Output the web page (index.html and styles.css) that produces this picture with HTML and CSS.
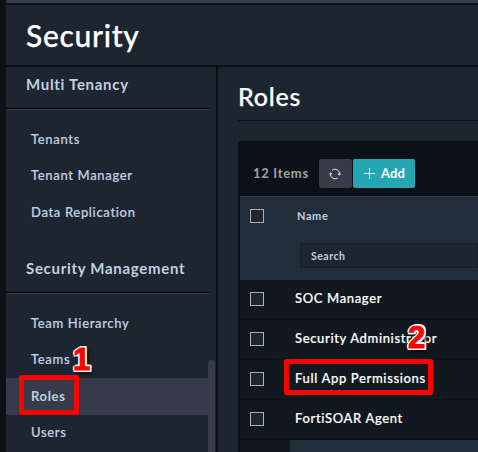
FILE: index.html
```html
<!DOCTYPE html>
<html lang="en">
<head>
<meta charset="utf-8">
<title>Security</title>
<link rel="stylesheet" href="styles.css">
</head>
<body>
<div class="app">
  <div class="topbar"></div>
  <header class="header"><h1>Security</h1></header>
  <div class="body">
    <nav class="sidebar">
      <h2>Multi Tenancy</h2>
      <ul>
        <li>Tenants</li>
        <li>Tenant Manager</li>
        <li>Data Replication</li>
      </ul>
      <h2 class="second">Security Management</h2>
      <ul>
        <li>Team Hierarchy</li>
        <li>Teams</li>
        <li class="active">Roles</li>
        <li>Users</li>
      </ul>
      <span class="scrollbar"></span>
    </nav>
    <main class="main">
      <h2 class="title">Roles</h2>
      <section class="panel">
        <div class="toolbar">
          <span class="count">12 Items</span>
          <button class="refresh" aria-label="Refresh">
            <svg width="12" height="12" viewBox="0 0 12 12" fill="none" stroke="currentColor" stroke-width="1"><path d="M3.2 2.1A4.6 4.6 0 0 1 10.5 6.5M8.8 9.9A4.6 4.6 0 0 1 1.5 5.5M8.7 5.7l1.8 1.5 1.3-1.8M.2 6.6l1.3-1.8 1.8 1.5"/></svg>
          </button>
          <button class="add">
            <svg width="11" height="11" viewBox="0 0 11 11" stroke="currentColor"><path d="M5.5 0v11M0 5.5h11"/></svg>
            <span>Add</span>
          </button>
        </div>
        <div class="table">
          <div class="thead">
            <div class="row-head"><i class="check"></i><span>Name</span></div>
            <div class="search">Search</div>
          </div>
          <div class="row"><i class="check"></i><span>SOC Manager</span></div>
          <div class="row"><i class="check"></i><span>Security Administrator</span></div>
          <div class="row"><i class="check"></i><span>Full App Permissions</span></div>
          <div class="row"><i class="check"></i><span>FortiSOAR Agent</span></div>
          <div class="tail"></div>
        </div>
      </section>
    </main>
  </div>
  <div class="mark mark-one"></div>
  <div class="mark mark-two"></div>
  <span class="num num-one">1</span>
  <span class="num num-two">2</span>
</div>
</body>
</html>
```
FILE: styles.css
```css
* { box-sizing: border-box; }
body { margin: 0; background: #0c1017; font-family: Lato, sans-serif; }
h1, h2, ul { margin: 0; padding: 0; font-weight: 500; }
li { list-style: none; }
.app { position: relative; width: 478px; height: 452px; overflow: hidden; padding-left: 6px; display: flex; flex-direction: column; }
.topbar { height: 3px; margin-bottom: 2px; background: #343c49; flex: none; }
.header { height: 60px; margin-bottom: 2px; padding-left: 20px; background: #1d2531; display: flex; align-items: center; flex: none; }
h1 { font-size: 30px; line-height: 36px; letter-spacing: .7px; color: #fff; -webkit-text-stroke: .25px; }
.body { flex: 1; min-height: 0; display: flex; gap: 2px; }
.sidebar { position: relative; width: 210px; background: #1d2531; color: #c0d0e2; overflow: hidden; flex: none; }
.sidebar h2 { width: 203px; height: 43px; padding: 7px 0 0 20px; font-size: 15px; line-height: 20px; font-weight: 700; letter-spacing: .7px; border-bottom: 1px solid #3a3d42; box-shadow: inset 0 -1px #000; }
.sidebar .second { margin-top: 28px; height: 36px; padding-top: 0; }
.sidebar ul { padding-top: 11px; }
.sidebar li { height: 36.4px; line-height: 36.8px; padding-left: 25px; width: 203px; font-size: 13px; font-weight: 500; letter-spacing: .66px; -webkit-text-stroke: .2px; }
.sidebar li:nth-child(2) { line-height: 37.4px; }
.sidebar .second + ul li:nth-child(2) { line-height: 35.6px; }
.sidebar .active { background: #353b48; font-weight: 700; box-shadow: 0 1px #353b48; -webkit-text-stroke: 0; }
.scrollbar { position: absolute; right: 1px; top: 293px; width: 7px; height: 110px; border-radius: 4px 4px 0 0; background: #353b48; }
.main { flex: 1; min-width: 0; background: #1d2531; padding-left: 20px; overflow: hidden; }
.title { height: 54px; padding-top: 14px; line-height: 30px; font-size: 25px; letter-spacing: .8px; color: #fff; border-bottom: 1px solid #0c1017; -webkit-text-stroke: .25px; }
.panel { margin-top: 20px; height: 320px; padding-left: 2px; background: #0c1017; border-top-left-radius: 2px; }
.toolbar { height: 55px; padding: 18px 0 0 13px; display: flex; }
.count { width: 66px; line-height: 28px; font-size: 13px; font-weight: 700; letter-spacing: .7px; color: #a0a3a5; }
button { font: inherit; border: 0; border-radius: 2px; padding: 0; height: 29px; display: flex; align-items: center; }
.refresh { width: 33px; margin-right: 1px; justify-content: center; background: #353b48; color: #e3e5e7; padding-right: 2px; }
.add { width: 62px; padding-left: 11px; gap: 6px; background: #23a6b1; color: #fff; font-size: 13px; font-weight: 700; letter-spacing: .1px; }
.add span { padding-bottom: 1px; }
.thead { height: 84px; border-top: 1px solid #353f59; background: #222d3a; color: #c0d0e2; }
.row-head { height: 38px; display: flex; align-items: center; padding-left: 10px; font-size: 11px; font-weight: 700; letter-spacing: .6px; }
.row-head span { margin-left: 33px; padding-bottom: 2px; }
.search { margin: 8px 0 0 60px; height: 25px; line-height: 24px; padding-left: 10px; border: 1px solid #17202a; background: #1d2531; font-size: 10.5px; font-weight: 700; letter-spacing: .5px; }
.check { width: 14px; height: 14px; border: 1px solid #b2b2ac; background: #1d2531; flex: none; }
.row { height: 40px; padding: 0 0 2px 10px; display: flex; align-items: center; background: #121820; border-bottom: 1px solid #0c1017; color: #fff; font-size: 13px; font-weight: 500; letter-spacing: .65px; white-space: nowrap; -webkit-text-stroke: .2px; }
.row span { margin-left: 31px; padding-bottom: 2px; }
.tail { height: 20px; border-left: 50px solid #121820; background: #222d3a; }
.mark { position: absolute; border: 5px solid #f00; border-radius: 2px; }
.mark-one { left: 19px; top: 375px; width: 60px; height: 40px; }
.mark-two { left: 284px; top: 359px; width: 149px; height: 36px; }
.num { position: absolute; font: bold 31px/30px "Liberation Sans", sans-serif; color: #f00; -webkit-text-stroke: 1px #f00; text-shadow: 2px 0 #fff, -2px 0 #fff, 0 2px #fff, 0 -2px #fff, 2px 2px #fff, -1.5px 1.5px #fff, 2px -2px #fff, -1.5px -1.5px #fff, 3px 3px 4px #000; }
.num-one { left: 73px; top: 345px; }
.num-two { left: 408px; top: 323px; }
```
